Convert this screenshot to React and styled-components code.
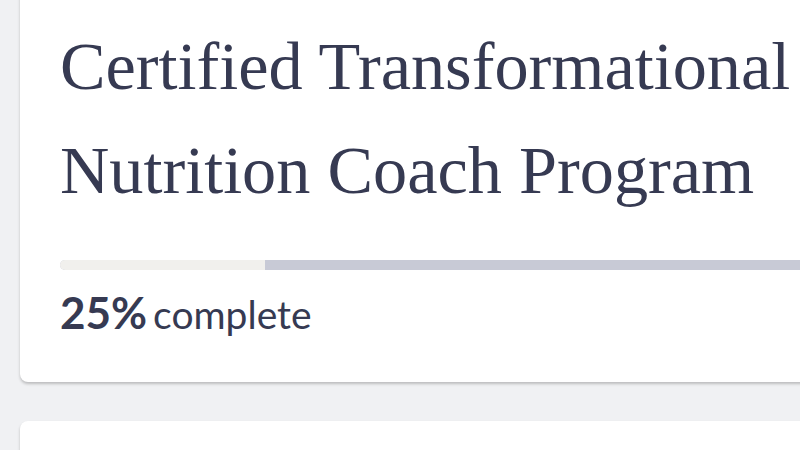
import React from 'react';
import styled, { createGlobalStyle } from 'styled-components';

const GlobalStyle = createGlobalStyle`
  html, body {
    margin: 0;
    padding: 0;
    background: #f0f1f3;
    overflow: hidden;
  }
`;

const CardList = styled.div`
  display: flex;
  flex-direction: column;
  gap: 39px;
  margin-top: -30px;
  padding: 0 0 0 20px;
  width: 900px;
`;

const Card = styled.div`
  background: #fff;
  border-radius: 8px;
  box-shadow: 0 2px 3px rgba(0, 0, 0, 0.22);
  padding: 44px 40px 44px 40px;
  min-height: ${(p) => (p.$empty ? '120px' : 'auto')};
`;

const Title = styled.h1`
  margin: 0;
  font-family: 'Liberation Serif', 'Times New Roman', serif;
  font-weight: 400;
  font-size: 68.3px;
  line-height: 104px;
  color: #363a52;
  white-space: nowrap;
`;

const Track = styled.div`
  margin-top: 38px;
  height: 10px;
  background: #c8cad6;
  border-radius: 5px 0 0 5px;
  overflow: hidden;
`;

const Fill = styled.div`
  height: 100%;
  background: #f1f0ed;
`;

const Status = styled.div`
  display: flex;
  align-items: baseline;
  gap: 6px;
  margin-top: 16px;
  font-family: Lato, 'Liberation Sans', sans-serif;
  font-size: 44px;
  color: #363a52;
`;

const Percent = styled.span`
  font-weight: 700;
`;

const Label = styled.span`
  font-weight: 400;
  font-size: 39px;
`;

export default function App() {
  const progress = 25;
  return (
    <>
      <GlobalStyle />
      <CardList>
        <Card>
          <Title>
            Certified Transformational
            <br />
            Nutrition Coach Program
          </Title>
          <Track>
            <Fill style={{ width: `${progress}%` }} />
          </Track>
          <Status>
            <Percent>{progress}%</Percent>
            <Label>complete</Label>
          </Status>
        </Card>
        <Card $empty />
      </CardList>
    </>
  );
}
